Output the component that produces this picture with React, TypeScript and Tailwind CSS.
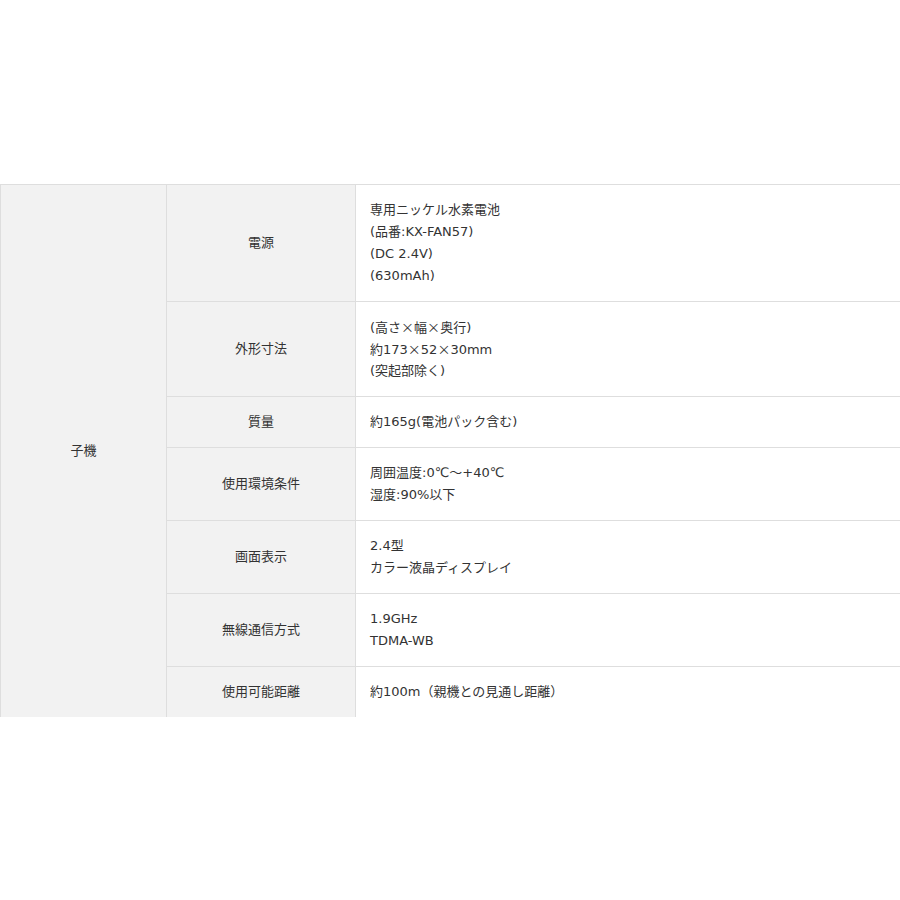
const rows: { label: string; lines: string[] }[] = [
  { label: "電源", lines: ["専用ニッケル水素電池", "(品番:KX-FAN57)", "(DC 2.4V)", "(630mAh)"] },
  { label: "外形寸法", lines: ["(高さ×幅×奥行)", "約173×52×30mm", "(突起部除く)"] },
  { label: "質量", lines: ["約165g(電池パック含む)"] },
  { label: "使用環境条件", lines: ["周囲温度:0℃～+40℃", "湿度:90%以下"] },
  { label: "画面表示", lines: ["2.4型", "カラー液晶ディスプレイ"] },
  { label: "無線通信方式", lines: ["1.9GHz", "TDMA-WB"] },
  { label: "使用可能距離", lines: ["約100m（親機との見通し距離）"] },
];

// the multiplication sign is full width in the original, so take it from the CJK font
function Line({ text }: { text: string }) {
  const parts = text.split("×");
  return (
    <div className="h-[22px]">
      {parts.map((p, i) => (
        <span key={i}>
          {i > 0 && <span className="font-['Noto_Sans_CJK_JP']">×</span>}
          {p}
        </span>
      ))}
    </div>
  );
}

export default function App() {
  return (
    <div
      className="w-[900px] h-[900px] bg-white pt-[184px] text-[13px] leading-[22px] text-[#333]"
      style={{ fontFamily: '"DejaVu Sans", "Noto Sans CJK JP", sans-serif' }}
    >
      <table className="w-full border-collapse table-fixed">
        <colgroup>
          <col className="w-[166px]" />
          <col className="w-[189px]" />
          <col />
        </colgroup>
        <tbody>
          {rows.map((r, i) => (
            <tr key={r.label}>
              {i === 0 && (
                <th
                  rowSpan={rows.length}
                  className="bg-[#f2f2f2] border-t border-l border-r border-[#dedede] font-normal text-center align-middle"
                >
                  子機
                </th>
              )}
              <th
                className={
                  "bg-[#f2f2f2] border-r border-[#dedede] font-normal text-center align-middle py-[14px] " +
                  (i === 0 ? "border-t " : "") +
                  (i < rows.length - 1 ? "border-b" : "")
                }
              >
                {r.label}
              </th>
              <td
                className={
                  "border-[#dedede] pl-[14px] pr-4 py-[14px] align-middle " +
                  (i === 0 ? "border-t " : "") +
                  (i < rows.length - 1 ? "border-b" : "")
                }
              >
                {r.lines.map((l) => (
                  <Line key={l} text={l} />
                ))}
              </td>
            </tr>
          ))}
        </tbody>
      </table>
    </div>
  );
}
